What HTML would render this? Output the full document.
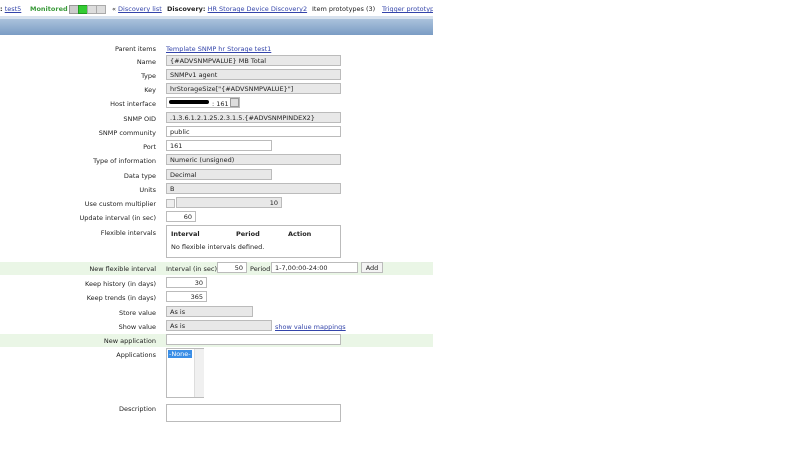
<!DOCTYPE html>
<html><head><meta charset="utf-8"><style>
body{margin:0;width:800px;height:450px;background:#fff;font-family:"DejaVu Sans","Liberation Sans",sans-serif;font-size:6.5px;color:#222;position:relative;overflow:hidden}
.a{position:absolute;white-space:nowrap}
.l{position:absolute;right:644px;text-align:right;white-space:nowrap}
.f{position:absolute;height:11px;border:1px solid #bbb;box-sizing:border-box;padding:2px 3px;line-height:6px;white-space:nowrap}
.g{background:#e8e8e8}
.w{background:#fff}
a{color:#3344aa;text-decoration:underline}
.band{position:absolute;left:0;width:433px;height:13px;background:#eaf6e6}
.hd{position:absolute;top:0;left:0;width:433px;height:16px;overflow:hidden}
</style></head><body>
<div class="hd">
<div class="a" style="top:5px;left:0;"><b>:</b> <a>test5</a></div>
<div class="a" style="top:5px;left:30px;color:#3a9a3a;font-weight:bold">Monitored</div>
<div class="a" style="top:5px;left:69px;width:8px;height:7px;background:#ccc;border:1px solid #999"></div>
<div class="a" style="top:5px;left:78px;width:8px;height:7px;background:#3c3;border:1px solid #292"></div>
<div class="a" style="top:5px;left:87px;width:8px;height:7px;background:#ddd;border:1px solid #aaa"></div>
<div class="a" style="top:5px;left:96px;width:8px;height:7px;background:#ddd;border:1px solid #aaa"></div>
<div class="a" style="top:5px;left:112px">« <a>Discovery list</a></div>
<div class="a" style="top:5px;left:167px"><b>Discovery:</b> <a>HR Storage Device Discovery2</a></div>
<div class="a" style="top:5px;left:312px">Item prototypes (3)</div>
<div class="a" style="top:5px;left:382px"><a>Trigger prototypes</a></div>
</div>
<div class="a" style="top:16px;left:0;width:433px;height:3px;background:#d8e2ee"></div>
<div class="a" style="top:19px;left:0;width:433px;height:16px;background:linear-gradient(#aac2dc,#7a9cc4)"></div>

<div class="l" style="top:45px">Parent items</div><div class="a" style="top:45px;left:166px"><a>Template SNMP hr Storage test1</a></div>
<div class="l" style="top:58px">Name</div><div class="f g" style="top:55px;left:166px;width:175px">{#ADVSNMPVALUE} MB Total</div>
<div class="l" style="top:72px">Type</div><div class="f g" style="top:69px;left:166px;width:175px">SNMPv1 agent</div>
<div class="l" style="top:86px">Key</div><div class="f g" style="top:83px;left:166px;width:175px">hrStorageSize["{#ADVSNMPVALUE}"]</div>
<div class="l" style="top:100px">Host interface</div><div class="f w" style="top:97px;left:166px;width:74px">&nbsp;</div>
<div class="a" style="top:100px;left:169px;width:40px;height:4px;background:#000;border-radius:3px"></div>
<div class="a" style="top:100px;left:212px">: 161</div>
<div class="a" style="top:98px;left:230px;width:9px;height:9px;background:#ddd;border:1px solid #999;box-sizing:border-box"></div>
<div class="l" style="top:115px">SNMP OID</div><div class="f g" style="top:112px;left:166px;width:175px">.1.3.6.1.2.1.25.2.3.1.5.{#ADVSNMPINDEX2}</div>
<div class="l" style="top:129px">SNMP community</div><div class="f w" style="top:126px;left:166px;width:175px">public</div>
<div class="l" style="top:143px">Port</div><div class="f w" style="top:140px;left:166px;width:106px">161</div>
<div class="l" style="top:157px">Type of information</div><div class="f g" style="top:154px;left:166px;width:175px">Numeric (unsigned)</div>
<div class="l" style="top:172px">Data type</div><div class="f g" style="top:169px;left:166px;width:106px">Decimal</div>
<div class="l" style="top:186px">Units</div><div class="f g" style="top:183px;left:166px;width:175px">B</div>
<div class="l" style="top:200px">Use custom multiplier</div>
<div class="a" style="top:199px;left:166px;width:7px;height:7px;border:1px solid #bbb;background:#eee"></div>
<div class="f g" style="top:197px;left:176px;width:106px;text-align:right">10</div>
<div class="l" style="top:214px">Update interval (in sec)</div><div class="f w" style="top:211px;left:166px;width:30px;text-align:right">60</div>
<div class="l" style="top:229px">Flexible intervals</div>
<div class="a" style="top:225px;left:166px;width:175px;height:33px;border:1px solid #bbb;box-sizing:border-box"></div>
<div class="a" style="top:230px;left:171px;font-weight:bold">Interval</div>
<div class="a" style="top:230px;left:236px;font-weight:bold">Period</div>
<div class="a" style="top:230px;left:288px;font-weight:bold">Action</div>
<div class="a" style="top:243px;left:171px">No flexible intervals defined.</div>
<div class="band" style="top:262px"></div>
<div class="l" style="top:265px">New flexible interval</div>
<div class="a" style="top:265px;left:166px">Interval (in sec)</div>
<div class="f w" style="top:262px;left:217px;width:30px;text-align:right">50</div>
<div class="a" style="top:265px;left:250px">Period</div>
<div class="f w" style="top:262px;left:271px;width:87px">1-7,00:00-24:00</div>
<div class="f" style="top:262px;left:361px;width:22px;background:#f4f4f4;text-align:center">Add</div>
<div class="l" style="top:280px">Keep history (in days)</div><div class="f w" style="top:277px;left:166px;width:41px;text-align:right">30</div>
<div class="l" style="top:294px">Keep trends (in days)</div><div class="f w" style="top:291px;left:166px;width:41px;text-align:right">365</div>
<div class="l" style="top:309px">Store value</div><div class="f g" style="top:306px;left:166px;width:87px">As is</div>
<div class="l" style="top:323px">Show value</div><div class="f g" style="top:320px;left:166px;width:106px">As is</div>
<div class="a" style="top:323px;left:275px"><a>show value mappings</a></div>
<div class="band" style="top:334px"></div>
<div class="l" style="top:337px">New application</div><div class="f w" style="top:334px;left:166px;width:175px"></div>
<div class="l" style="top:351px">Applications</div>
<div class="a" style="top:348px;left:166px;width:38px;height:50px;border:1px solid #bbb;box-sizing:border-box"></div>
<div class="a" style="top:350px;left:168px;background:#3a8ee6;color:#fff;padding:0 1px">-None-</div>
<div class="a" style="top:349px;left:194px;width:9px;height:48px;background:#f0f0f0;border-left:1px solid #ddd"></div>
<div class="l" style="top:405px">Description</div>
<div class="a" style="top:404px;left:166px;width:175px;height:18px;border:1px solid #bbb;box-sizing:border-box"></div>
</body></html>
